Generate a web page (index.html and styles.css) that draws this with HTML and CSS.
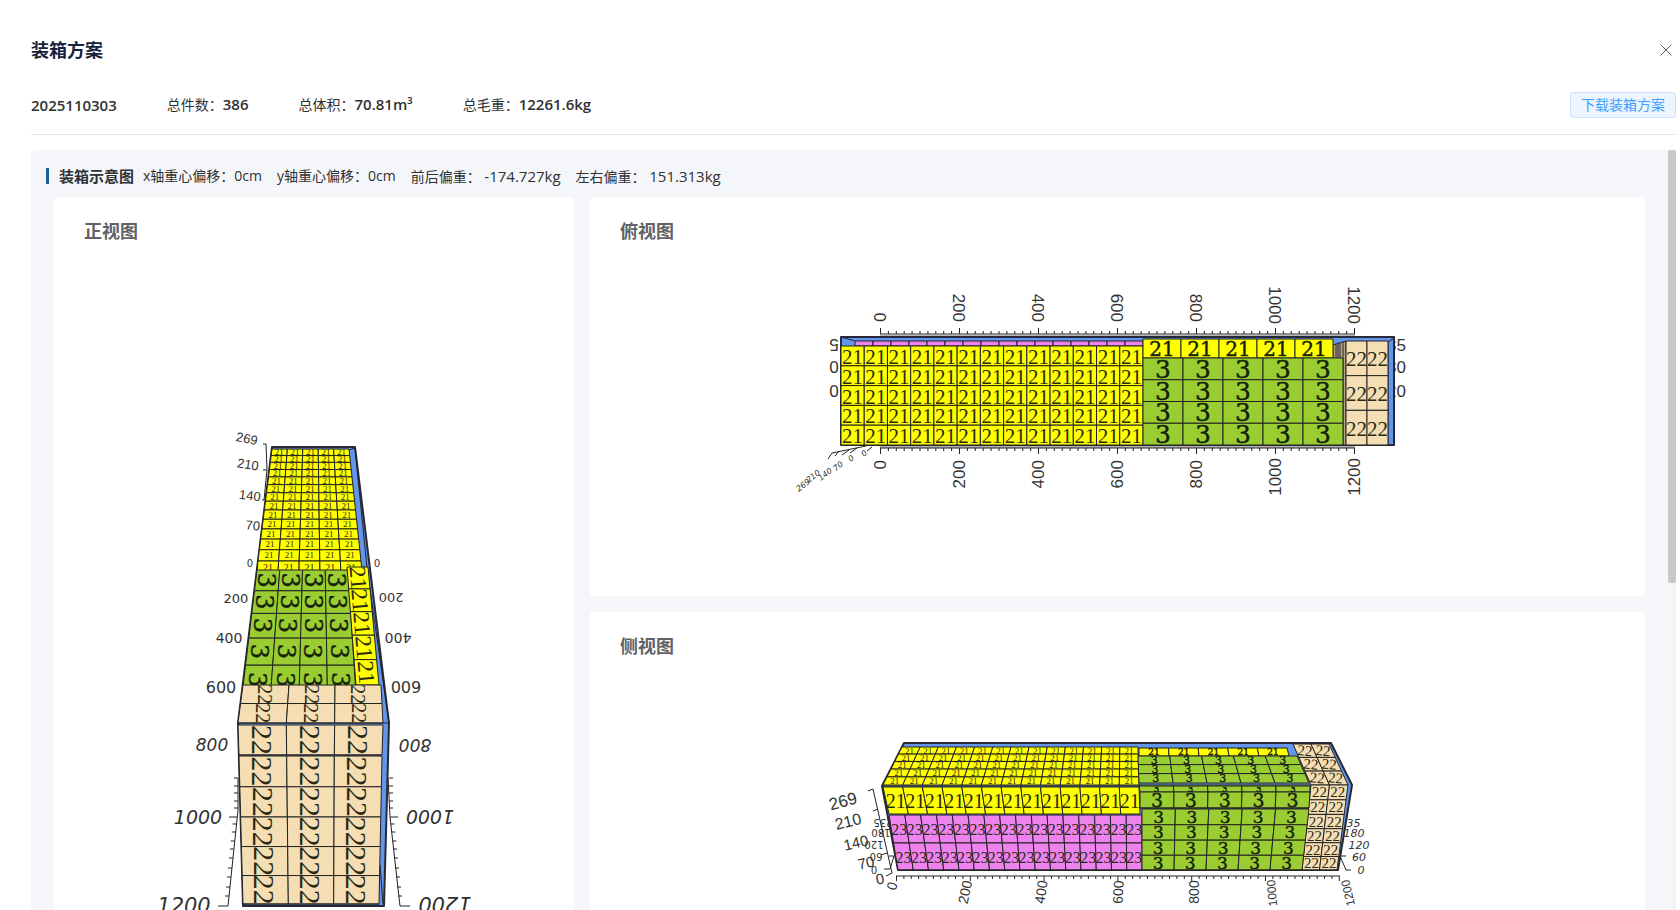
FILE: index.html
```html
<!DOCTYPE html>
<html lang="zh-CN">
<head>
    <meta charset="UTF-8">
    <meta name="viewport" content="width=device-width, initial-scale=1.0">
    <title>装箱方案</title>
    <link rel="stylesheet" href="styles.css">
</head>
<body>
    <div class="drawer">
        <header class="drawer-header">
            <h1>装箱方案</h1>
            <button class="close-btn" type="button" aria-label="关闭">
                <svg viewBox="0 0 12 12" width="12" height="12"><path d="M0.5 0.5L11.5 11.5M11.5 0.5L0.5 11.5"/></svg>
            </button>
        </header>

        <div class="summary">
            <strong>2025110303</strong>
            <span>总件数：<strong>386</strong></span>
            <span>总体积：<strong>70.81m³</strong></span>
            <span>总毛重：<strong>12261.6kg</strong></span>
            <button class="download-btn" type="button">下载装箱方案</button>
        </div>

        <div class="content">
            <main class="panel">
                <div class="panel-title">
                    <h2>装箱示意图</h2>
                    <span>x轴重心偏移：0cm</span>
                    <span>y轴重心偏移：0cm</span>
                    <span class="weight">前后偏重： <span>-174.727kg</span></span>
                    <span class="weight">左右偏重： <span>151.313kg</span></span>
                </div>
                <div class="views">
                    <section class="card card-front">
                        <h3>正视图</h3>
                        <svg id="frontView" viewBox="54 260 520 740"></svg>
                    </section>
                    <section class="card">
                        <h3>俯视图</h3>
                        <svg id="topView" viewBox="590 260 1055 336"></svg>
                    </section>
                    <section class="card">
                        <h3>侧视图</h3>
                        <svg id="sideView" viewBox="590 675 1055 336"></svg>
                    </section>
                </div>
            </main>
            <div class="scrollbar"><div class="scrollbar-thumb"></div></div>
        </div>
    </div>

    <script src="script.js"></script>
</body>
</html>
```
FILE: styles.css
```css
* {
    box-sizing: border-box;
}

body {
    margin: 0;
    background-color: #ffffff;
    color: #303133;
    font-family: "Open Sans", "Noto Sans CJK SC", sans-serif;
    font-size: 14px;
    line-height: 20px;
}

h1, h2, h3 {
    margin: 0;
}

button {
    font-family: inherit;
    cursor: pointer;
}

.drawer {
    display: flex;
    flex-direction: column;
    height: 100vh;
    padding: 38px 4px 0 31px;
    overflow: hidden;
}

/* Header */
.drawer-header {
    display: flex;
    justify-content: space-between;
    align-items: center;
    height: 24px;
}

.drawer-header h1 {
    color: #17233d;
    font-size: 18px;
    line-height: 24px;
}

.close-btn {
    display: flex;
    padding: 4px;
    border: none;
    background: none;
}

.close-btn path {
    fill: none;
    stroke: #606266;
    stroke-width: 1;
}

/* Totals */
.summary {
    display: flex;
    align-items: center;
    gap: 50px;
    height: 73px;
    padding-top: 13px;
    margin-bottom: 15px;
    border-bottom: 1px solid #e4e7ed;
}

.summary strong {
    font-size: 15px;
    font-weight: 600;
}

.download-btn {
    height: 26px;
    margin-left: auto;
    padding: 0 10px;
    border: 1px solid #c6e2ff;
    border-radius: 3px;
    background-color: #ecf5ff;
    color: #409eff;
    font-size: 14px;
    line-height: 24px;
}

/* Scrolling area */
.content {
    display: flex;
    flex: 1;
    min-height: 0;
}

.panel {
    flex: 1;
    min-width: 0;
    overflow: hidden;
    padding: 16px 23px 16px 15px;
    border-radius: 4px 0 0 0;
    background-color: #f4f6fa;
}

.scrollbar {
    width: 8px;
    background-color: #f5f5f5;
}

.scrollbar-thumb {
    height: 57%;
    border-radius: 2px;
    background-color: #c8c8c8;
}

.panel-title {
    display: flex;
    align-items: center;
    gap: 15px;
    height: 20px;
    margin-bottom: 11px;
}

.panel-title h2 {
    margin-right: -6px;
    padding-left: 10px;
    border-left: 3px solid #1f5f99;
    font-size: 15px;
    font-weight: 600;
    line-height: 16px;
}

.weight span {
    font-size: 15px;
}

.views {
    display: grid;
    grid-template-columns: 520fr 1055fr;
    gap: 16px;
    padding-left: 8px;
}

.card {
    border-radius: 4px;
    background-color: #ffffff;
}

.card-front {
    grid-row: span 2;
}

.card h3 {
    height: 63px;
    padding: 22px 30px 0;
    color: #606266;
    font-size: 18px;
    line-height: 24px;
}

.card svg {
    display: block;
    width: 100%;
}

/* Drawings */
.face {
    stroke: #222222;
    stroke-width: 1;
    stroke-linejoin: round;
}

.container {
    fill: #6495ed;
    stroke: #252a36;
    stroke-width: 2;
    stroke-linejoin: round;
}

.line {
    fill: none;
    stroke: #222222;
    stroke-width: 1;
}

.rail {
    fill: none;
    stroke: #b4b4b4;
    stroke-width: 2;
}

.box-text {
    fill: #2a2a14;
    font-family: "Liberation Serif", serif;
}

.box-text-wide {
    fill: #14200a;
    stroke: #14200a;
    stroke-width: 0.4;
    font-family: "DejaVu Serif", serif;
}

.axis-text {
    fill: #333333;
    font-family: "Liberation Sans", sans-serif;
}

.axis-wide {
    font-family: "DejaVu Sans", sans-serif;
}

.axis-slant {
    font-family: "DejaVu Sans", sans-serif;
    font-style: italic;
}
```
FILE: script.js
```javascript
const YELLOW = "#ffff00";
const GREEN = "#9acd32";
const VIOLET = "#ee82ee";
const WHEAT = "#f5deb3";

const add = (svg, tag, attrs, text) => {
    const node = document.createElementNS("http://www.w3.org/2000/svg", tag);
    for (const key in attrs) {
        node.setAttribute(key, attrs[key]);
    }
    if (text) {
        node.textContent = text;
    }
    svg.appendChild(node);
};

const polygon = (svg, points, cls, fill) => {
    const attrs = { points: points.map(p => p.join(",")).join(" "), class: cls };
    if (fill) {
        attrs.fill = fill;
    }
    add(svg, "polygon", attrs);
};

const path = (svg, d, cls = "line") => add(svg, "path", { d, class: cls });

// Text centred on x, y
const label = (svg, text, x, y, size, angle = 0, cls = "axis-text", anchor = "middle") => {
    add(svg, "text", {
        x, y,
        dy: Math.round(size * 0.36),
        class: cls,
        "font-size": size,
        "text-anchor": anchor,
        transform: `rotate(${angle} ${x} ${y})`
    }, text);
};

// Projects the unit square onto four corners: tl, tr, br, bl
const project = ([a, b, c, d]) => {
    const dx1 = b[0] - c[0], dx2 = d[0] - c[0], dx3 = a[0] - b[0] + c[0] - d[0];
    const dy1 = b[1] - c[1], dy2 = d[1] - c[1], dy3 = a[1] - b[1] + c[1] - d[1];
    const det = dx1 * dy2 - dx2 * dy1;
    const g = (dx3 * dy2 - dx2 * dy3) / det;
    const h = (dx1 * dy3 - dx3 * dy1) / det;
    return (u, v) => {
        const w = g * u + h * v + 1;
        return [
            ((b[0] - a[0] + g * b[0]) * u + (d[0] - a[0] + h * d[0]) * v + a[0]) / w,
            ((b[1] - a[1] + g * b[1]) * u + (d[1] - a[1] + h * d[1]) * v + a[1]) / w
        ];
    };
};

// One face of a stack of boxes
const stack = (svg, corners, cols, rows, fill, text, size, angle = 0, cls = "box-text") => {
    const at = project(corners);
    for (let r = 0; r < rows; r++) {
        for (let c = 0; c < cols; c++) {
            polygon(svg, [
                at(c / cols, r / rows),
                at((c + 1) / cols, r / rows),
                at((c + 1) / cols, (r + 1) / rows),
                at(c / cols, (r + 1) / rows)
            ], "face", fill);
            if (text) {
                const [x, y] = at((c + 0.5) / cols, (r + 0.5) / rows);
                label(svg, text, x, y, size, angle, cls);
            }
        }
    }
};

const rect = (x1, y1, x2, y2) => [[x1, y1], [x2, y1], [x2, y2], [x1, y2]];

const drawFront = () => {
    const svg = document.getElementById("frontView");

    // Height axis
    path(svg, "M263 444L266 444L267 470L263 470M267 470L264 500L262 500");
    label(svg, "269", 247, 438, 13, 12);
    label(svg, "210", 248, 464, 13, 9);
    label(svg, "140", 250, 495, 13, 7);
    label(svg, "70", 253, 525, 13, 5);

    // Length axes
    const marks = [
        ["0", 250, 377, 563, 10], ["200", 236, 391, 598, 13], ["400", 229, 398, 638, 14],
        ["600", 221, 406, 687, 16], ["800", 212, 415, 745, 17], ["1000", 198, 430, 817, 19],
        ["1200", 184, 445, 905, 21]
    ];
    marks.forEach(([text, left, right, y, size]) => {
        const cls = size > 16 ? "axis-text axis-slant" : "axis-text axis-wide";
        label(svg, text, left, y, size, 0, cls);
        label(svg, text, right, y, size, 180, cls);
    });
    path(svg, "M238 778L238 810L228 906M388 778L390 817L400 906");
    [778, 786, 793, 801, 808, 824, 832, 841, 849, 858, 868, 877, 887, 896].forEach(y => {
        const shift = Math.max(0, (y - 810) / 9.6);
        path(svg, `M${238 - shift} ${y}h-4M${389 + shift} ${y}h4`);
    });
    path(svg, "M237 817H229M390 817H398M228 906H218M400 906H410");

    // Container
    polygon(svg, [[272, 447], [355, 447], [389, 723], [384, 906], [243, 906], [238, 723]], "container");

    // Cargo, back to front
    stack(svg, [[272, 449], [349, 449], [361, 561], [258, 561]], 5, 13, YELLOW, "21", 9);
    stack(svg, [[258, 561], [361, 561], [362, 573], [257, 573]], 5, 1, YELLOW, "21", 10);
    path(svg, "M349 450L355 448M355 448L367 568L389 723");
    stack(svg, [[257, 570], [348, 570], [356, 695], [242, 695]], 4, 5, GREEN, "3", 24, 90, "box-text-wide");
    stack(svg, [[347, 567], [368, 567], [379, 685], [356, 685]], 1, 5, YELLOW, "21", 23, 85);
    stack(svg, [[243, 685], [381, 685], [383, 723], [238, 723]], 3, 2, WHEAT, "22", 20, 90);
    stack(svg, [[238, 725], [383, 725], [382, 755], [239, 755]], 3, 1, WHEAT, "22", 30, 90);
    stack(svg, [[239, 756], [382, 756], [379, 904], [243, 904]], 3, 5, WHEAT, "22", 30, 90);
    path(svg, "M238 723H389M239 755H382M243 904H379M380 865L383 904");
};

const drawTop = () => {
    const svg = document.getElementById("topView");

    // Length axes
    path(svg, "M880 336H1355M880 447H1355", "rail");
    path(svg, "M880 334H1355M880 448H1355");
    for (let i = 0; i <= 60; i++) {
        const x = 880.5 + i * 7.9;
        const size = i % 10 === 0 ? 6 : 3;
        path(svg, `M${x} 334v-${size}M${x} 448v${size}`);
    }
    for (let i = 0; i <= 6; i++) {
        const x = 880 + i * 79;
        const edge = i > 4 ? 2 : 0;
        label(svg, String(i * 200), x, 322 + edge, 17, 90, "axis-text", "end");
        label(svg, String(i * 200), x, 460 - edge, 17, -90, "axis-text", "end");
    }

    // Width axes
    [["5", "35", 345], ["0", "80", 367], ["0", "20", 391]].forEach(([left, right, y]) => {
        label(svg, left, 834, y, 17, 180);
        label(svg, right, 1406, y, 17, 0, "axis-text", "end");
    });

    // Height axis, seen almost end-on
    path(svg, "M866 446L832 453L828 459M849 450L842 455M857 448L850 453M839 451L835 456M872 447L867 451");
    [["269", 803, 485], ["210", 813, 476], ["140", 825, 474], ["70", 838, 466], ["0", 851, 458], ["0", 864, 453]].forEach(([text, x, y]) => {
        label(svg, text, x, y, 8, -38, "axis-text axis-slant");
    });

    // Container
    polygon(svg, rect(841, 337, 1394, 445), "container");
    path(svg, "M841 337L855 341M1388 342L1394 338M1388 342V445");

    // Cargo
    stack(svg, rect(855, 341, 1143, 346), 16, 1, VIOLET);
    stack(svg, rect(841, 346, 1143, 445), 13, 5, YELLOW, "21", 21);
    polygon(svg, [[1333, 345], [1346, 341], [1346, 445], [1333, 445]], "face", "#b9a78a");
    path(svg, "M1336 344V445M1338 344V445M1340 343V445M1343 342V445");
    stack(svg, rect(1143, 339, 1333, 358), 5, 1, YELLOW, "21", 20, 0, "box-text-wide");
    stack(svg, rect(1143, 358, 1343, 445), 5, 4, GREEN, "3", 25, 0, "box-text-wide");
    stack(svg, rect(1346, 341, 1388, 445), 2, 3, WHEAT, "22", 21);
};

const drawSide = () => {
    const svg = document.getElementById("sideView");

    // Height axis
    path(svg, "M868 791L873 789L892 873L886 876M873 811L878 809M880 833L883 831M881 855L887 853");
    label(svg, "269", 843, 801, 17, -15);
    label(svg, "210", 848, 821, 16, -14);
    label(svg, "140", 856, 843, 15, -13);
    label(svg, "70", 866, 863, 15, -12);
    label(svg, "0", 880, 879, 15, -10);

    // Width axes
    path(svg, "M894 856L890 869L884 869M889 856H894M1340 856L1346 870L1351 870M1341 856H1346");
    [["235", 883, 1350, 823], ["180", 881, 1354, 833], ["120", 874, 1359, 845], ["60", 876, 1359, 857], ["0", 874, 1361, 870]].forEach(([text, left, right, y]) => {
        label(svg, text, left, y, 10, 180, "axis-text axis-wide");
        label(svg, text, right, y, 11, 0, "axis-text axis-slant");
    });

    // Length axis
    path(svg, "M896 876H1340");
    for (let i = 0; i <= 60; i++) {
        path(svg, `M${896.5 + i * 7.38} 876v${i % 10 === 0 ? 5 : 3}`);
    }
    [["0", 892, 886, -72], ["200", 965, 892, -78], ["400", 1041, 892, -82], ["600", 1118, 892, -87], ["800", 1194, 892, -90], ["1000", 1272, 893, -95], ["1200", 1348, 893, -103]].forEach(([text, x, y, angle]) => {
        label(svg, text, x, y, text.length > 3 ? 12 : 14, angle);
    });

    // Container
    polygon(svg, [[904, 743], [1331, 743], [1352, 785], [1338, 870], [898, 870], [882, 786]], "container");

    // Upper faces
    stack(svg, [[902, 747], [1138, 747], [1139, 785], [883, 785]], 13, 5, YELLOW, "21", 9);
    stack(svg, [[1139, 748], [1287, 748], [1289, 756], [1139, 756]], 5, 1, YELLOW, "21", 9, 0, "box-text-wide");
    stack(svg, [[1138, 756], [1297, 756], [1309, 783], [1139, 783]], 5, 3, GREEN, "3", 11, 0, "box-text-wide");
    stack(svg, [[1293, 744], [1329, 744], [1348, 785], [1311, 785]], 2, 3, WHEAT, "22", 15, 5);

    // Side faces
    stack(svg, [[883, 787], [1139, 787], [1140, 814], [889, 814]], 13, 1, YELLOW, "21", 20);
    stack(svg, [[889, 815], [1142, 815], [1142, 870], [898, 870]], 16, 2, VIOLET, "23", 16);
    stack(svg, [[1311, 785], [1348, 785], [1337, 870], [1302, 870]], 2, 6, WHEAT, "22", 15);
    stack(svg, [[1139, 785], [1310, 785], [1310, 792], [1140, 792]], 5, 1, GREEN, "3", 8, 0, "box-text-wide");
    stack(svg, [[1140, 792], [1310, 792], [1309, 808], [1140, 808]], 5, 1, GREEN, "3", 19, 0, "box-text-wide");
    stack(svg, [[1142, 809], [1309, 809], [1302, 870], [1142, 870]], 5, 4, GREEN, "3", 17, 0, "box-text-wide");
    path(svg, "M883 786H1310M1140 808H1309M898 870H1337");
};

drawFront();
drawTop();
drawSide();
```
